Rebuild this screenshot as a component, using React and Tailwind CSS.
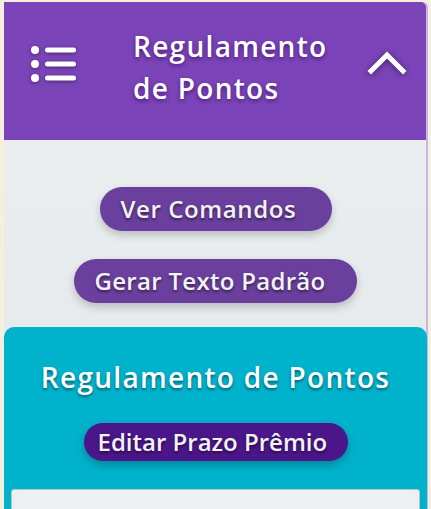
import React from "react";

const font = { fontFamily: '"Open Sans", "Noto Sans", sans-serif' };

function ListIcon() {
  return (
    <svg width="48" height="40" viewBox="0 0 48 40" className="drop-shadow-[0_1px_2px_rgba(0,0,0,0.4)]">
      <circle cx="5" cy="6" r="4" fill="white" />
      <circle cx="5" cy="20" r="4" fill="white" />
      <circle cx="5" cy="34" r="4" fill="white" />
      <rect x="15" y="3.5" width="31" height="5" rx="2.5" fill="white" />
      <rect x="15" y="17.5" width="31" height="5" rx="2.5" fill="white" />
      <rect x="15" y="31.5" width="31" height="5" rx="2.5" fill="white" />
    </svg>
  );
}

function Chevron() {
  return (
    <svg width="40" height="26" viewBox="0 0 40 26" className="drop-shadow-[0_1px_3px_rgba(0,0,0,0.5)]">
      <path d="M4 21 L20 5 L36 21" stroke="white" strokeWidth="5" fill="none" strokeLinecap="square" />
    </svg>
  );
}

export default function App() {
  return (
    <div className="w-[431px] h-[509px] overflow-hidden bg-[#f5efdf] pt-[2px] pl-[4px] pr-[3px]" style={font}>
      <div className="rounded-tr-[5px] border-r-2 border-[#c9b6e4] bg-gradient-to-b from-[#ecf0f1] to-[#e3e6e8] min-h-[520px]">
        <div className="h-[138px] bg-[#7b44b8] rounded-tr-[5px] flex items-center pl-[26px] pr-[22px]">
          <div className="mb-[14px]"><ListIcon /></div>
          <div className="ml-[55px] mb-[8px] flex-1 text-white text-[28px] leading-[42px] font-semibold tracking-[1.3px] [text-shadow:0_2px_4px_rgba(40,0,80,0.6)]">
            Regulamento<br />de Pontos
          </div>
          <div className="mb-[16px] mr-[-3px]"><Chevron /></div>
        </div>
        <div className="flex flex-col items-center pt-[47px] gap-[28px]">
          <button className="h-[44px] w-[232px] rounded-full bg-[#6a3f9e] text-[#f2f2f2] text-[24px] font-semibold tracking-[0.6px] pl-[21px] text-left whitespace-nowrap shadow-[0_4px_8px_rgba(0,0,0,0.2)] [text-shadow:0_2px_3px_rgba(0,0,0,0.5)] ml-[1px]">
            Ver Comandos
          </button>
          <button className="h-[44px] w-[283px] rounded-full bg-[#6a3f9e] text-[#f2f2f2] text-[24px] font-semibold tracking-[0.3px] pl-[21px] text-left whitespace-nowrap shadow-[0_4px_8px_rgba(0,0,0,0.2)] [text-shadow:0_2px_3px_rgba(0,0,0,0.5)]">
            Gerar Texto Padrão
          </button>
        </div>
        <div className="mt-[24px] bg-[#00b2cc] rounded-[10px] mr-[-1px] pt-[31px] pb-[40px] px-[7px] flex flex-col items-center">
          <div className="text-white text-[28px] font-semibold leading-[38px] tracking-[1.3px] whitespace-nowrap [text-shadow:0_2px_3px_rgba(0,0,0,0.45)]">
            Regulamento de Pontos
          </div>
          <button className="mt-[27px] h-[38px] w-[264px] rounded-full bg-[#4b168a] text-[#f2f2f2] text-[24px] font-semibold pl-[14px] text-left whitespace-nowrap shadow-[0_4px_8px_rgba(0,0,0,0.25)] [text-shadow:0_2px_3px_rgba(0,0,0,0.5)]">
            Editar Prazo Prêmio
          </button>
          <div className="mt-[28px] w-full h-[60px] bg-[#ecf0f1] rounded-[3px] border border-[#b8c4c8]"></div>
        </div>
      </div>
    </div>
  );
}
